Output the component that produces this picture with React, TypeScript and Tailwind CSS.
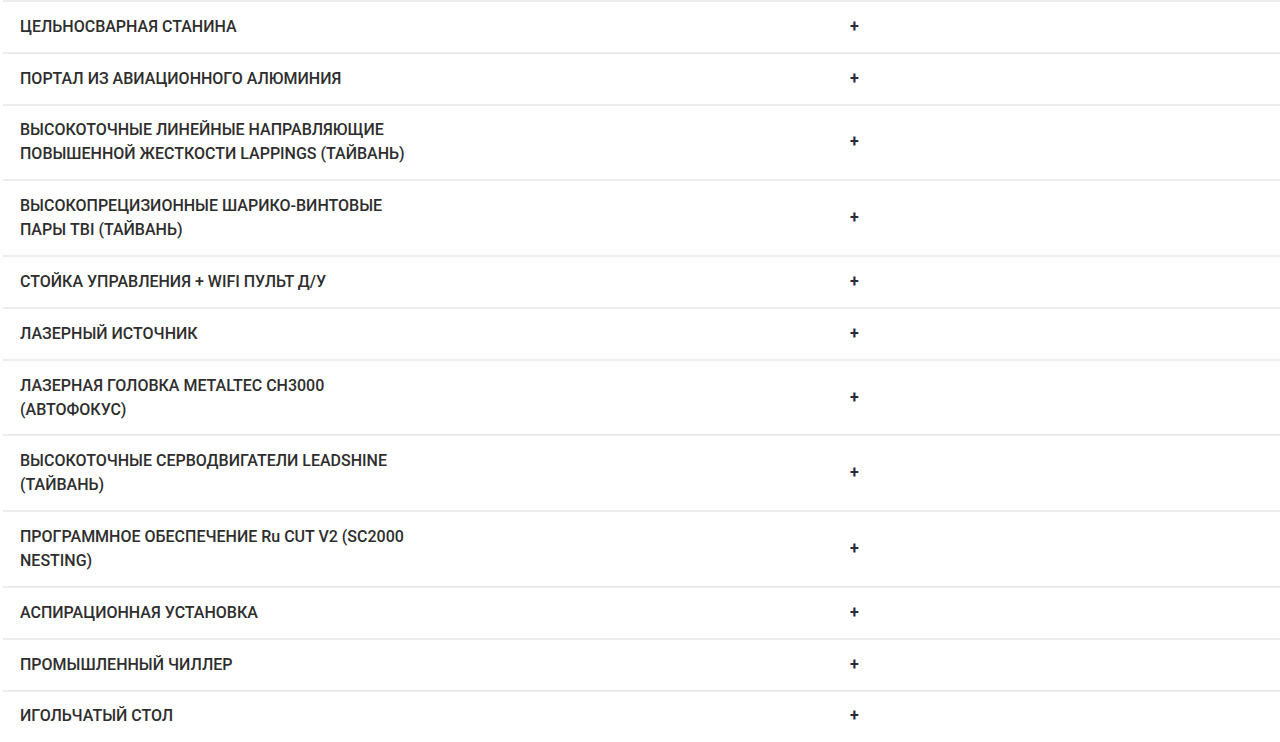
import React from "react";

const items: string[][] = [
  ["ЦЕЛЬНОСВАРНАЯ СТАНИНА"],
  ["ПОРТАЛ ИЗ АВИАЦИОННОГО АЛЮМИНИЯ"],
  ["ВЫСОКОТОЧНЫЕ ЛИНЕЙНЫЕ НАПРАВЛЯЮЩИЕ", "ПОВЫШЕННОЙ ЖЕСТКОСТИ LAPPINGS (ТАЙВАНЬ)"],
  ["ВЫСОКОПРЕЦИЗИОННЫЕ ШАРИКО-ВИНТОВЫЕ", "ПАРЫ TBI (ТАЙВАНЬ)"],
  ["СТОЙКА УПРАВЛЕНИЯ + WIFI ПУЛЬТ Д/У"],
  ["ЛАЗЕРНЫЙ ИСТОЧНИК"],
  ["ЛАЗЕРНАЯ ГОЛОВКА METALTEC CH3000", "(АВТОФОКУС)"],
  ["ВЫСОКОТОЧНЫЕ СЕРВОДВИГАТЕЛИ LEADSHINE", "(ТАЙВАНЬ)"],
  ["ПРОГРАММНОЕ ОБЕСПЕЧЕНИЕ Ru CUT V2 (SC2000", "NESTING)"],
  ["АСПИРАЦИОННАЯ УСТАНОВКА"],
  ["ПРОМЫШЛЕННЫЙ ЧИЛЛЕР"],
  ["ИГОЛЬЧАТЫЙ СТОЛ"],
];

export default function App() {
  return (
    <div
      className="min-h-screen bg-white pl-[3px]"
      style={{ fontFamily: "Roboto, 'Noto Sans', sans-serif" }}
    >
      {items.map((lines, i) => (
        <div
          key={i}
          className="flex items-center border-t-2 border-[#ececec] px-[17px] py-[12.9px]"
        >
          <div className="w-[830px] shrink-0 text-[16px] leading-[24px] font-medium text-[#2e2e2e]">
            {lines.map((l, j) => (
              <div key={j}>{l}</div>
            ))}
          </div>
          <div className="text-[16px] font-bold leading-[24px] text-[#2b2b3a]">+</div>
        </div>
      ))}
    </div>
  );
}
